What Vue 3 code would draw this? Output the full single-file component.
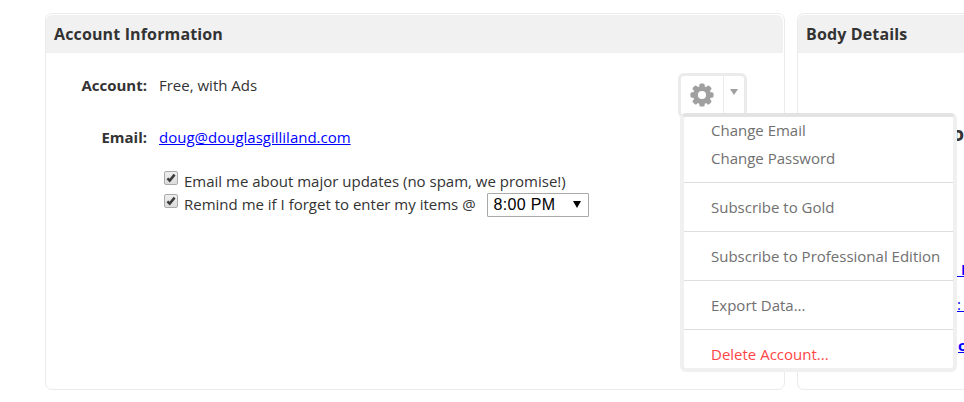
<script setup>
import { ref } from 'vue'

const updates = ref(true)
const reminder = ref(true)
const menu = [
  [{ label: 'Change Email' }, { label: 'Change Password' }],
  [{ label: 'Subscribe to Gold' }],
  [{ label: 'Subscribe to Professional Edition' }],
  [{ label: 'Export Data...' }],
  [{ label: 'Delete Account...', danger: true }],
]
const options = [
  { label: 'Email me about major updates (no spam, we promise!)', model: updates },
  { label: 'Remind me if I forget to enter my items @', model: reminder, time: '8:00 PM' },
]
const teeth = [0, 45, 90, 135, 180, 225, 270, 315]
</script>

<template>
  <main class="page">
    <section class="panel account">
      <h2>Account Information</h2>
      <div class="content">
        <dl>
          <dt>Account:</dt>
          <dd>Free, with Ads</dd>
          <dt>Email:</dt>
          <dd><a href="#">doug@douglasgilliland.com</a></dd>
        </dl>
        <div class="options">
          <div v-for="o in options" :key="o.label" class="option">
            <span class="check" role="checkbox" :aria-checked="o.model.value">
              <svg viewBox="0 0 12 12"><path d="M2.4 6.3 4.7 8.6 9.6 2.6" /></svg>
            </span>
            <span>{{ o.label }}</span>
            <span v-if="o.time" class="select">{{ o.time }}<i></i></span>
          </div>
        </div>
      </div>

      <div class="trigger">
        <span class="gear">
          <svg viewBox="-12 -12 24 24">
            <rect v-for="a in teeth" :key="a" x="-2.7" y="-11.6" width="5.4" height="6" rx="1.6" :transform="`rotate(${a})`" />
            <circle r="6.6" />
          </svg>
        </span>
        <span class="drop"><i></i></span>
      </div>
      <nav class="menu">
        <ul v-for="(group, i) in menu" :key="i">
          <li v-for="item in group" :key="item.label" :class="{ danger: item.danger }">{{ item.label }}</li>
        </ul>
      </nav>
    </section>

    <section class="panel body">
      <h2>Body Details</h2>
      <div class="details">
        <strong>D</strong>
        <a class="first" href="#">&nbsp;H</a>
        <a class="second" href="#">:&nbsp;</a>
        <a class="third" href="#">c</a>
      </div>
    </section>
  </main>
</template>

<style>
html, body { margin: 0; background: #fff; }
</style>

<style scoped>
* { box-sizing: border-box; }
.page {
  display: flex;
  gap: 12px;
  width: 964px;
  height: 402px;
  padding: 13px 0 0 45px;
  overflow: hidden;
  font: 15px/20px "Open Sans", sans-serif;
  color: #333;
}
.panel {
  position: relative;
  flex: none;
  width: 740px;
  height: 377px;
  padding-top: 1px;
  border: 1px solid #ebebeb;
  border-radius: 7px;
  background: #fff;
}
.account { z-index: 1; }
.body { width: 167px; border-right: 0; border-radius: 7px 0 0 7px; }
h2 {
  height: 38px;
  margin: 0 1px 0 0;
  padding: 0 8px;
  border-radius: 6px 6px 0 0;
  background: #f1f1f1;
  font-size: 16px;
  line-height: 38px;
  font-weight: 700;
  letter-spacing: 0.14px;
}
.body h2 { margin: 0; border-radius: 6px 0 0 0; }
dl {
  display: grid;
  grid-template-columns: 101px 1fr;
  grid-auto-rows: 20px;
  gap: 32px 12px;
  margin: 0;
  padding-top: 22px;
}
dt { font-weight: 700; text-align: right; }
dd { margin: 0; }
a { color: #00f; }
.options { padding: 22px 0 0 118px; }
.option { display: flex; align-items: center; height: 23px; }
.check {
  width: 14px;
  height: 14px;
  margin: 0 6px 6px 0;
  border: 1px solid #aaa;
  border-radius: 2px;
  background: linear-gradient(#eee, #dcdcdc);
}
.check svg { display: block; width: 12px; height: 12px; fill: none; stroke: #3c3c3c; stroke-width: 2.5; }
.select {
  display: flex;
  align-items: center;
  justify-content: space-between;
  width: 102px;
  height: 24px;
  margin: 2px 0 0 11px;
  padding: 0 7px 0 6px;
  border: 1px solid #a9a9a9;
  border-radius: 1px;
  color: #000;
  font: 16px/22px "Liberation Sans", sans-serif;
  letter-spacing: 0.3px;
}
.select i { border: 4px solid transparent; border-top: 7px solid #000; border-bottom: 0; }
.trigger {
  position: absolute;
  left: 632px;
  top: 59px;
  display: flex;
  width: 69px;
  height: 45px;
  border: 3px solid #ebebeb;
  border-radius: 6px;
  background: #fff;
}
.gear { width: 43px; padding: 7px 0 0 8.5px; border-right: 1px solid #ebebeb; }
.gear svg { display: block; width: 24px; height: 24px; fill: #a0a0a0; }
.gear circle { fill: none; stroke: #a0a0a0; stroke-width: 5; }
.drop { padding: 13px 0 0 6px; }
.drop i { display: block; border: 4px solid transparent; border-top: 6px solid #a0a0a0; border-bottom: 0; }
.menu {
  position: absolute;
  left: 634px;
  top: 99px;
  width: 277px;
  height: 259px;
  border: 4px solid #f0f0f0;
  border-top-color: #e3e3e3;
  border-radius: 6px;
  background: #fff;
  color: #707070;
}
ul { margin: 0; padding: 10px 0 10px 27px; list-style: none; border-bottom: 1px solid #ddd; }
ul:first-child { margin-top: -1px; padding-top: 0; }
ul:last-child { padding-bottom: 0; border: 0; }
li { height: 28px; line-height: 28px; white-space: nowrap; }
.danger { color: #ff4545; }
.details { display: flex; flex-direction: column; align-items: flex-start; padding: 72px 0 0 160px; line-height: 20px; font-weight: 700; }
.details strong { margin-left: -5px; }
.details a { white-space: pre; }
.first { margin-top: 114px; margin-left: -1px; }
.details .second { margin-top: 15px; margin-left: -1px; font-weight: 400; }
.third { margin-top: 21px; }
</style>
